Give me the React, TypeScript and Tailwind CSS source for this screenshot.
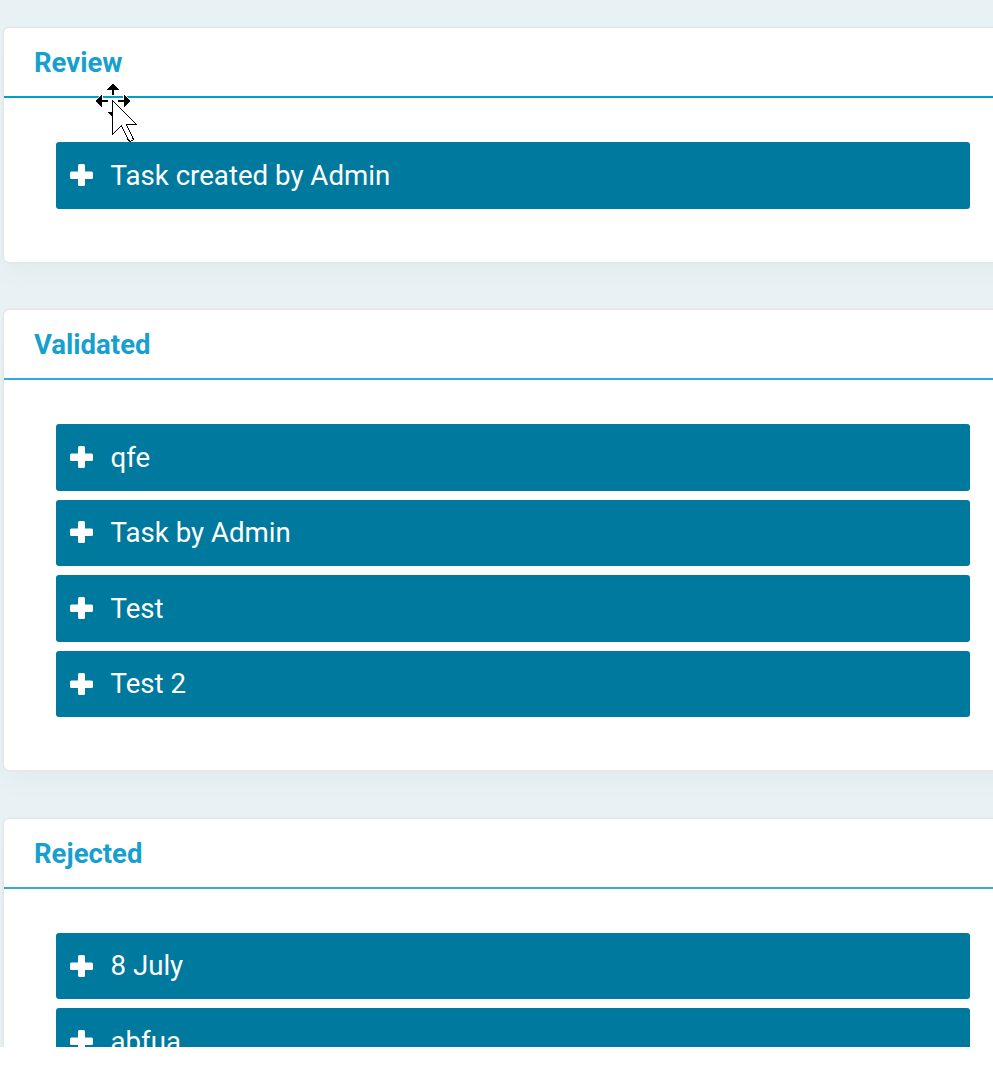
import clsx from 'clsx';

type Column = {
  title: string;
  tasks: string[];
  line: string;
};

const columns: Column[] = [
  { title: 'Review', tasks: ['Task created by Admin'], line: 'border-[#00a0cd]' },
  { title: 'Validated', tasks: ['qfe', 'Task by Admin', 'Test', 'Test 2'], line: 'border-[#2aaed6]' },
  { title: 'Rejected', tasks: ['8 July', 'abfua'], line: 'border-[#35aacb]' },
];

function PlusIcon() {
  return (
    <svg className="mb-px h-[22px] w-[23px] shrink-0 fill-white" viewBox="0 0 23 22">
      <rect x="8" y="0" width="7" height="22" rx="1.5" />
      <rect x="0" y="7.5" width="23" height="7.5" rx="1.5" />
    </svg>
  );
}

function TaskItem({ name }: { name: string }) {
  return (
    <li className="mb-[9.2px] flex h-[66.4px] items-center rounded-[3px] bg-[#00799e] pl-[14.5px] text-white">
      <PlusIcon />
      <span className="ml-[17.5px] text-[27.65px] leading-none">{name}</span>
    </li>
  );
}

function BoardColumn({ title, tasks, line }: Column) {
  return (
    <section className="-mr-10 mb-[48.2px] rounded-[5px] bg-white shadow-[0_0_0_1.5px_#e4e6e7,0_15px_24px_rgba(0,0,0,0.022)]">
      <h2 className={clsx('flex h-[70px] items-center border-b-2 pl-[30px] pt-[2px] text-[27.5px] font-bold leading-none text-[#179fd0]', line)}>
        {title}
      </h2>
      <ul className="pb-[44px] pl-[51.5px] pr-[63px] pt-[44.2px]">
        {tasks.map((task) => (
          <TaskItem key={task} name={task} />
        ))}
      </ul>
    </section>
  );
}

// Drag cursor: move arrows with the pointer on top
function MoveCursor() {
  return (
    <svg className="pointer-events-none absolute left-[85px] top-[75px] h-[75px] w-[60px]" viewBox="0 0 60 75" shapeRendering="crispEdges">
      <g fill="none" stroke="#fff" strokeWidth="2">
        <path d="M28 9l6 6h-5v5h-2v-5h-5z" />
        <path d="M11 26l6-6v5h6v2h-6v5z" />
        <path d="M45 26l-6-6v5h-6v2h6v5z" />
      </g>
      <g fill="#000">
        <path d="M28 8.4l6.6 6.6h-5.6v5h-2v-5h-5.6z" />
        <path d="M10.4 26l6.6-6.6v5.6h6v2h-6v5.6z" />
        <path d="M45.6 26l-6.6-6.6v5.6h-6v2h6v5.6z" />
        <path d="M22 37h6v6z" />
      </g>
      <path d="M27.5 25.5V59.5L36.5 50.5L43.5 65.5L45.5 66.5L48.5 64.5L41.5 49.5H51.5Z" fill="#fff" stroke="#000" strokeWidth="1" />
    </svg>
  );
}

export default function App() {
  return (
    <div className="h-[1067px] overflow-hidden bg-white font-['Roboto',sans-serif]">
      <main className="relative h-[1047px] overflow-hidden bg-[#e8f1f3] pl-1 pt-7">
        {columns.map((column) => (
          <BoardColumn key={column.title} {...column} />
        ))}
        <MoveCursor />
      </main>
    </div>
  );
}
